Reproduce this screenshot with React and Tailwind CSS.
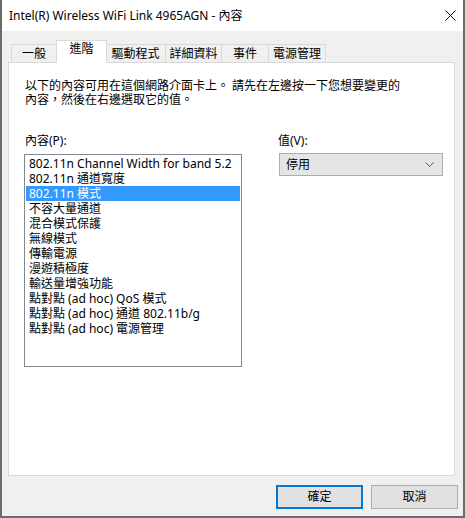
import React from "react";

const FONT = { fontFamily: '"Noto Sans", "Noto Sans CJK TC", sans-serif' };

const tabs = [
  { label: "一般", w: "w-[46px]" },
  { label: "進階", w: "w-[51px]", active: true },
  { label: "驅動程式", w: "w-[61px]" },
  { label: "詳細資料", w: "w-[57px]" },
  { label: "事件", w: "w-[48px]" },
  { label: "電源管理", w: "w-[58px]" },
];

const items = [
  "802.11n Channel Width for band 5.2",
  "802.11n 通道寬度",
  "802.11n 模式",
  "不容大量通道",
  "混合模式保護",
  "無線模式",
  "傳輸電源",
  "漫遊積極度",
  "輸送量增強功能",
  "點對點 (ad hoc) QoS 模式",
  "點對點 (ad hoc) 通道 802.11b/g",
  "點對點 (ad hoc) 電源管理",
];

export default function App() {
  return (
    <div
      style={FONT}
      className="w-[465px] h-[518px] flex flex-col border-2 border-t-0 border-[#6b6b6b] bg-[#f0f0f0] text-[12px] text-black"
    >
      {/* title bar */}
      <div className="h-[31px] bg-white flex items-center justify-between pl-[7px] pr-[7px]">
        <span className="leading-none">Intel(R) Wireless WiFi Link 4965AGN - 內容</span>
        <svg width="11" height="11" viewBox="0 0 11 11">
          <path d="M0.5 0.5 L10.5 10.5 M10.5 0.5 L0.5 10.5" stroke="#111" strokeWidth="1" />
        </svg>
      </div>

      <div className="flex flex-col pl-[6px]">
        {/* tabs */}
        <div className="flex items-end h-[23px] mt-[8px] pl-[3px]">
          {tabs.map((t) =>
            t.active ? (
              <div
                key={t.label}
                className={`${t.w} h-[23px] -mb-px relative z-10 -mx-[1px] bg-white border border-b-0 border-[#d9d9d9] flex justify-center pt-[1px] leading-[14px]`}
              >
                {t.label}
              </div>
            ) : (
              <div
                key={t.label}
                className={`${t.w} h-[18px] border border-b-0 border-[#d9d9d9] -ml-px first:ml-0 flex justify-center pt-[2px] leading-[14px]`}
              >
                {t.label}
              </div>
            )
          )}
        </div>

        {/* panel */}
        <div className="w-[447px] h-[414px] bg-white border border-[#d9d9d9] pl-[16px] pt-[16px]">
          <p className="leading-[14px]">
            以下的內容可用在這個網路介面卡上。 請先在左邊按一下您想要變更的
            <br />
            內容，然後在右邊選取它的值。
          </p>

          <div className="flex mt-[26px]">
            <div className="w-[217px] flex flex-col">
              <div className="leading-[15px]">內容(P):</div>
              <div className="mt-[6px] -ml-px h-[213px] border border-[#828790] p-px">
                {items.map((it, i) => (
                  <div
                    key={it}
                    className={`h-[15px] leading-[15px] pl-[3px] whitespace-nowrap ${
                      i === 2 ? "bg-[#3399ff] text-white" : ""
                    }`}
                  >
                    {it}
                  </div>
                ))}
              </div>
            </div>

            <div className="ml-[36px] flex flex-col">
              <div className="leading-[15px]">值(V):</div>
              <div className="mt-[5px] ml-px w-[164px] h-[23px] bg-[#e5e5e5] border border-[#adadad] flex items-center justify-between pl-[6px] pr-[8px]">
                <span>停用</span>
                <svg width="9" height="5" viewBox="0 0 9 5">
                  <path d="M0.5 0.5 L4.5 4.5 L8.5 0.5" fill="none" stroke="#555" strokeWidth="1" />
                </svg>
              </div>
            </div>
          </div>
        </div>

        {/* buttons */}
        <div className="flex justify-end gap-[8px] mt-[9px] pr-[5px] w-[461px] -ml-[6px]">
          <button className="w-[87px] h-[24px] bg-[#e1e1e1] border-2 border-[#0078d7] flex items-center justify-center">
            確定
          </button>
          <button className="w-[87px] h-[24px] bg-[#e1e1e1] border border-[#adadad] flex items-center justify-center">
            取消
          </button>
        </div>
      </div>
    </div>
  );
}
